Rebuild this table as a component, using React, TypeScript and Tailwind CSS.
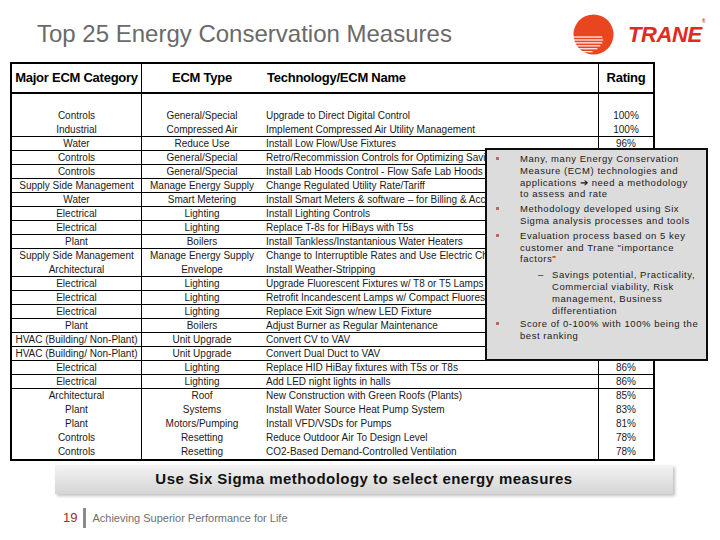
import React from 'react';

type Row = { cat: string; type: string; name: string; rating: string; line: boolean };

// ratings for rows 4-18 sit under the callout box in the slide, so they are left blank
const rows: Row[] = [
    { cat: 'Controls', type: 'General/Special', name: 'Upgrade to Direct Digital Control', rating: '100%', line: false },
    { cat: 'Industrial', type: 'Compressed Air', name: 'Implement Compressed Air Utility Management', rating: '100%', line: true },
    { cat: 'Water', type: 'Reduce Use', name: 'Install Low Flow/Use Fixtures', rating: '96%', line: true },
    { cat: 'Controls', type: 'General/Special', name: 'Retro/Recommission Controls for Optimizing Savings', rating: '', line: true },
    { cat: 'Controls', type: 'General/Special', name: 'Install Lab Hoods Control - Flow Safe Lab Hoods', rating: '', line: true },
    { cat: 'Supply Side Management', type: 'Manage Energy Supply', name: 'Change Regulated Utility Rate/Tariff', rating: '', line: true },
    { cat: 'Water', type: 'Smart Metering', name: 'Install Smart Meters & software \u2013 for Billing & Accounting', rating: '', line: true },
    { cat: 'Electrical', type: 'Lighting', name: 'Install Lighting Controls', rating: '', line: true },
    { cat: 'Electrical', type: 'Lighting', name: 'Replace T-8s for HiBays with T5s', rating: '', line: true },
    { cat: 'Plant', type: 'Boilers', name: 'Install Tankless/Instantanious Water Heaters', rating: '', line: true },
    { cat: 'Supply Side Management', type: 'Manage Energy Supply', name: 'Change to Interruptible Rates and Use Electric Chillers', rating: '', line: false },
    { cat: 'Architectural', type: 'Envelope', name: 'Install Weather-Stripping', rating: '', line: true },
    { cat: 'Electrical', type: 'Lighting', name: 'Upgrade Fluorescent Fixtures w/ T8 or T5 Lamps & Electronic Ballasts', rating: '', line: true },
    { cat: 'Electrical', type: 'Lighting', name: 'Retrofit Incandescent Lamps w/ Compact Fluorescent Lamps', rating: '', line: true },
    { cat: 'Electrical', type: 'Lighting', name: 'Replace Exit Sign w/new LED Fixture', rating: '', line: true },
    { cat: 'Plant', type: 'Boilers', name: 'Adjust Burner as Regular Maintenance', rating: '', line: true },
    { cat: 'HVAC (Building/ Non-Plant)', type: 'Unit Upgrade', name: 'Convert CV to VAV', rating: '', line: true },
    { cat: 'HVAC (Building/ Non-Plant)', type: 'Unit Upgrade', name: 'Convert Dual Duct to VAV', rating: '', line: true },
    { cat: 'Electrical', type: 'Lighting', name: 'Replace HID HiBay fixtures with T5s or T8s', rating: '86%', line: true },
    { cat: 'Electrical', type: 'Lighting', name: 'Add LED night lights in halls', rating: '86%', line: true },
    { cat: 'Architectural', type: 'Roof', name: 'New Construction with Green Roofs (Plants)', rating: '85%', line: false },
    { cat: 'Plant', type: 'Systems', name: 'Install Water Source Heat Pump System', rating: '83%', line: false },
    { cat: 'Plant', type: 'Motors/Pumping', name: 'Install VFD/VSDs for Pumps', rating: '81%', line: false },
    { cat: 'Controls', type: 'Resetting', name: 'Reduce Outdoor Air To Design Level', rating: '78%', line: false },
    { cat: 'Controls', type: 'Resetting', name: 'CO2-Based Demand-Controlled Ventilation', rating: '78%', line: false },
];

function TraneLogo() {
    const stripes = [
        { y: 23, x2: 30 },
        { y: 26, x2: 31 },
        { y: 29, x2: 30 },
        { y: 32, x2: 28 },
        { y: 35, x2: 25 },
        { y: 38, x2: 20 },
    ];
    return (
        <div className="flex items-center gap-[14px]">
            <svg width="41" height="41" viewBox="0 0 42 42">
                <circle cx="21" cy="21" r="20.5" fill="#e9461f" />
                {stripes.map((s) => (
                    <rect key={s.y} x="0" y={s.y} width={s.x2} height="1.2" fill="#ffffff" />
                ))}
            </svg>
            <span className="font-['Liberation_Sans',Arial,sans-serif] text-[22px] font-black italic leading-none tracking-[-0.4px] text-[#e3281c]">
                TRANE<sup className="text-[5px] align-top">®</sup>
            </span>
        </div>
    );
}

function TableRow({ row, spacer }: { row?: Row; spacer?: boolean }) {
    const h = spacer ? 'h-[15px]' : 'h-[14px]';
    const border = row?.line ? 'border-b border-black' : '';
    return (
        <div className={`flex ${h} ${border} text-[10px] leading-[13px] text-[#1a1a1a]`}>
            <div className="w-[130px] border-r border-black text-center whitespace-nowrap">{row?.cat}</div>
            <div className="w-[120px] text-center whitespace-nowrap">{row?.type}</div>
            <div className="w-[336px] pl-[4px] whitespace-nowrap overflow-hidden">{row?.name}</div>
            <div className="w-[55px] border-l border-black text-center">{row?.rating}</div>
        </div>
    );
}

function Bullet({ lines }: { lines: string[] }) {
    return (
        <div className="flex">
            <div className="w-[33px] pl-[9px] pt-[4px]">
                <div className="w-[3px] h-[3px] bg-[#b46a6a]" />
            </div>
            <div className="flex flex-col whitespace-nowrap">
                {lines.map((l) => (
                    <span key={l}>{l}</span>
                ))}
            </div>
        </div>
    );
}

function Callout() {
    return (
        <div className="absolute left-[485px] top-[148px] w-[223px] h-[213px] bg-[#0d0d0d] p-[2px]">
            <div className="w-full h-full bg-[#dcdcdc] pt-[3px] pr-[4px] text-[9.5px] leading-[11.8px] tracking-[0.55px] text-[#1a1a1a]">
                <Bullet lines={['Many, many Energy Conservation', 'Measure (ECM) technologies and', 'applications \u2794 need a methodology', 'to assess and rate']} />
                <div className="mt-[3px]">
                    <Bullet lines={['Methodology developed using Six', 'Sigma analysis processes and tools']} />
                </div>
                <div className="mt-[3px]">
                    <Bullet lines={['Evaluation process based on 5 key', 'customer and Trane "importance', 'factors"']} />
                </div>
                <div className="mt-[4px] flex">
                    <span className="w-[14px] ml-[51px]">{'\u2013'}</span>
                    <div className="flex flex-col whitespace-nowrap">
                        <span>Savings potential, Practicality,</span>
                        <span>Commercial viability, Risk</span>
                        <span>management, Business</span>
                        <span>differentiation</span>
                    </div>
                </div>
                <div className="mt-[2px]">
                    <Bullet lines={['Score of 0-100% with 100% being the', 'best ranking']} />
                </div>
            </div>
        </div>
    );
}

export default function App() {
    return (
        <div className="relative w-[720px] h-[540px] bg-white overflow-hidden font-['Liberation_Sans',Arial,sans-serif]">
            {/* Title + logo */}
            <div className="flex justify-between h-[62px]">
                <h1 className="pl-[37px] pt-[20px] text-[24px] leading-[28px] text-[#6a6a6a]">
                    Top 25 Energy Conservation Measures
                </h1>
                <div className="pt-[14px] pr-[15px]">
                    <TraneLogo />
                </div>
            </div>

            {/* Table */}
            <div className="ml-[10px] w-[645px] border-2 border-black">
                <div className="flex h-[30px] border-b-2 border-black items-center text-[13px] font-bold tracking-[-0.25px] text-black">
                    <div className="w-[130px] h-full flex items-center justify-center border-r border-black">Major ECM Category</div>
                    <div className="w-[120px] text-center">ECM Type</div>
                    <div className="w-[336px] pl-[5px]">Technology/ECM Name</div>
                    <div className="w-[55px] h-full flex items-center justify-center border-l border-black">Rating</div>
                </div>
                <TableRow spacer />
                {rows.map((r, i) => (
                    <TableRow key={i} row={r} />
                ))}
            </div>

            <Callout />

            {/* Banner */}
            <div className="ml-[55px] mt-[4px] w-[618px] h-[29px] flex items-center justify-center bg-gradient-to-b from-[#f4f4f4] to-[#d4d4d4] shadow-[2px_2px_3px_rgba(0,0,0,0.25)]">
                <span className="text-[15px] font-bold tracking-[0.45px] text-[#111]">
                    Use Six Sigma methodology to select energy measures
                </span>
            </div>

            {/* Footer */}
            <div className="ml-[63px] mt-[14px] flex items-center gap-[6px]">
                <span className="text-[13px] text-[#9b2b2b]">19</span>
                <div className="w-[3px] h-[20px] bg-[#8a8a8a]" />
                <span className="text-[11px] text-[#6e6e6e]">Achieving Superior Performance for Life</span>
            </div>
        </div>
    );
}
